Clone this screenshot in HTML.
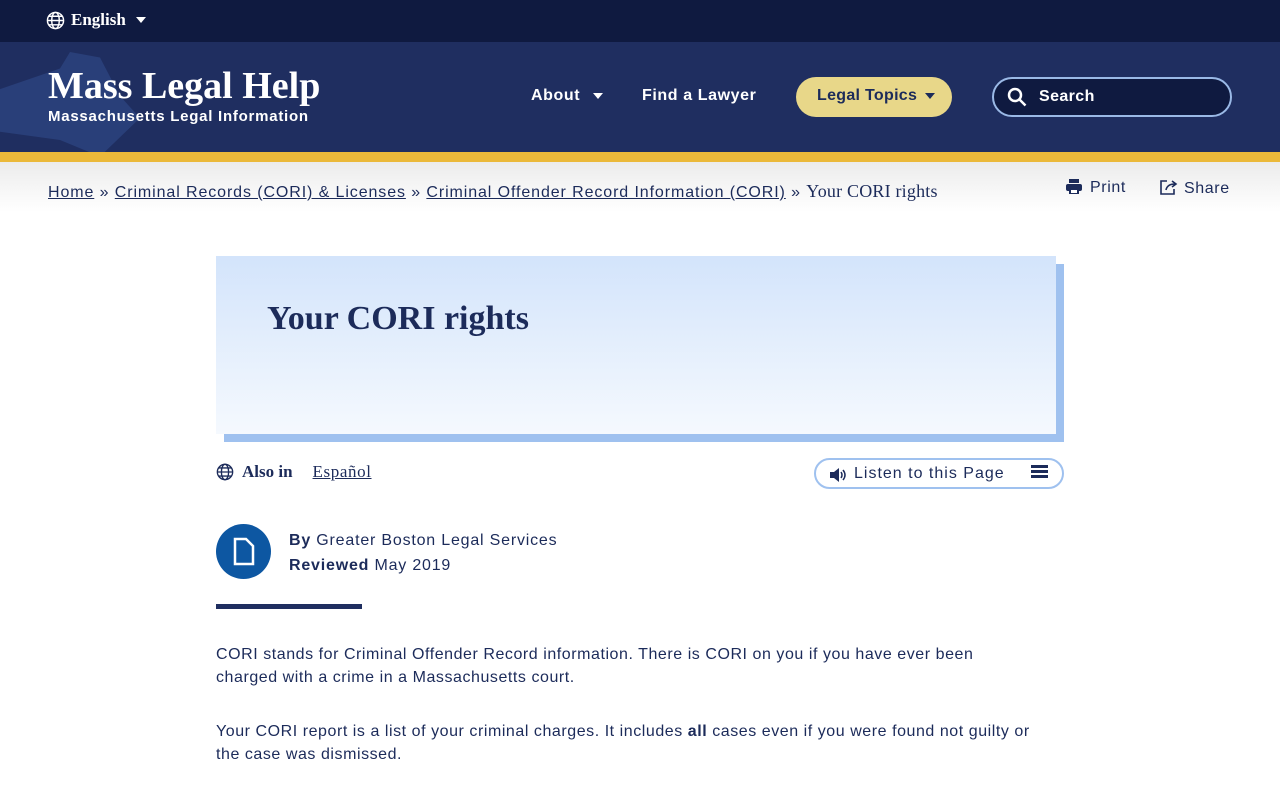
<!DOCTYPE html>
<html><head><meta charset="utf-8"><style>
*{margin:0;padding:0;box-sizing:border-box}
body{width:1280px;height:800px;overflow:hidden;background:#fff;font-family:"Liberation Sans",sans-serif;color:#1c2b5a}
.top{height:42px;background:#0f1a40;position:relative}
.lang{position:absolute;left:46px;top:10px;color:#fff;font-family:"Liberation Serif",serif;font-weight:bold;font-size:17px;display:flex;align-items:center;gap:6px}
.hdr{height:110px;background:#1f2e60;position:relative;overflow:hidden}
.map{position:absolute;left:-20px;top:10px;width:200px;height:110px;background:#2c4380;opacity:.8;clip-path:polygon(0 40%,40% 15%,45% 0,60% 5%,70% 40%,80% 60%,60% 95%,40% 80%,0 70%)}
.logo{position:absolute;left:48px;top:24px;color:#fff}
.logo h1{font-family:"Liberation Serif",serif;font-size:38px;font-weight:bold;letter-spacing:0px;line-height:40px}
.logo p{font-size:15px;font-weight:bold;margin-top:2px;letter-spacing:.75px}
.nav{position:absolute;top:35px;color:#fff;font-weight:bold;font-size:16px;letter-spacing:.6px}
.tri{display:inline-block;width:0;height:0;border-left:5px solid transparent;border-right:5px solid transparent;border-top:6px solid currentColor;vertical-align:middle;margin-left:8px}
.lt{position:absolute;left:796px;top:35px;width:156px;height:40px;border-radius:20px;background:#e8d789;color:#1c2b5a;font-weight:bold;font-size:16px;padding:10px 0 0 21px;letter-spacing:.3px}
.search{position:absolute;left:992px;top:35px;width:240px;height:40px;border-radius:20px;border:2px solid #9ab9e6;background:#0f1a40;color:#fff;font-size:16px;font-weight:bold;padding:9px 0 0 45px;letter-spacing:.4px}
.gold{height:10px;background:#ebb93a}
.bc{height:50px;background:linear-gradient(#ececec,#fff);position:relative;font-size:16px}
.bc .l{position:absolute;left:48px;top:19px;white-space:nowrap;letter-spacing:.9px}
.bc a{color:#1c2b5a;text-decoration:underline}
.bc .s{font-family:"Liberation Serif",serif;font-size:18px;letter-spacing:.2px}
.pr{position:absolute;top:17px;font-size:16px;letter-spacing:.6px}
.hero{position:absolute;left:216px;top:256px;width:840px;height:178px;background:linear-gradient(#d3e4fb,#f5f9fe);box-shadow:8px 8px 0 #9fc1ef}
.hero h2{font-family:"Liberation Serif",serif;font-size:34px;position:absolute;left:51px;top:44px;font-weight:bold}
.also{position:absolute;left:216px;top:462px;font-family:"Liberation Serif",serif;font-size:17px;font-weight:bold;display:flex;align-items:center;gap:8px}
.listen{position:absolute;left:814px;top:458px;width:250px;height:31px;border:2px solid #9fc1ef;border-radius:16px;font-size:16px;padding:5px 0 0 38px;letter-spacing:1px}
.doc{position:absolute;left:216px;top:524px;width:55px;height:55px;border-radius:50%;background:#0d57a2}
.by{position:absolute;left:289px;top:528px;font-size:16px;line-height:25px;letter-spacing:.8px}
.bar{position:absolute;left:216px;top:604px;width:146px;height:5px;background:#1f2e60}
.p{position:absolute;left:216px;width:820px;font-size:16px;line-height:23px;letter-spacing:.55px}
</style></head><body>
<div class="top"><div class="lang"><svg width="19" height="19" viewBox="0 0 20 20" fill="none" stroke="#fff" stroke-width="1.5"><circle cx="10" cy="10" r="8.5"/><ellipse cx="10" cy="10" rx="4" ry="8.5"/><path d="M1.5 10h17M3 5.5h14M3 14.5h14"/></svg>English<span class="tri" style="margin-left:4px"></span></div></div>
<div class="hdr"><div class="map"></div>
<div class="logo"><h1>Mass Legal Help</h1><p>Massachusetts Legal Information</p></div>
<div class="nav" style="left:531px;top:45px">About<span class="tri" style="margin-left:13px"></span></div>
<div class="nav" style="left:642px;top:45px">Find a Lawyer</div>
<div class="lt">Legal Topics<span class="tri"></span></div>
<div class="search"><svg style="position:absolute;left:13px;top:8px" width="20" height="20" viewBox="0 0 20 20" fill="none" stroke="#fff" stroke-width="2.5"><circle cx="8" cy="8" r="6"/><path d="M12.5 12.5l6 6"/></svg>Search</div>
</div>
<div class="gold"></div>
<div class="bc"><div class="l"><a>Home</a> » <a>Criminal Records (CORI) &amp; Licenses</a> » <a>Criminal Offender Record Information (CORI)</a> » <span class="s">Your CORI rights</span></div>
<div class="pr" style="left:1066px"><svg width="16" height="15" viewBox="0 0 16 15" fill="#1c2b5a" style="vertical-align:-2px;margin-right:8px"><rect x="3" y="0" width="10" height="4"/><rect x="0" y="5" width="16" height="7" rx="2"/><rect x="4" y="10" width="8" height="5" fill="#fff" stroke="#1c2b5a" stroke-width="2"/></svg>Print</div>
<div class="pr" style="left:1160px"><svg width="18" height="16" viewBox="0 0 18 16" fill="none" stroke="#1c2b5a" stroke-width="1.6" style="vertical-align:-2px;margin-right:6px"><path d="M7 2H1v13h13v-5"/><path d="M6 11c1-5 5-6 9-6M12 2l4 3-4 3"/></svg>Share</div></div>
<div class="hero"><h2>Your CORI rights</h2></div>
<div class="also"><svg width="18" height="18" viewBox="0 0 20 20" fill="none" stroke="#1c2b5a" stroke-width="1.5"><circle cx="10" cy="10" r="8.5"/><ellipse cx="10" cy="10" rx="4" ry="8.5"/><path d="M1.5 10h17M3 5.5h14M3 14.5h14"/></svg>Also in <span style="margin-left:12px;text-decoration:underline;font-weight:normal;letter-spacing:.6px">Español</span></div>
<div class="listen"><svg style="position:absolute;left:14px;top:8px" width="18" height="14" viewBox="0 0 18 14" fill="#1c2b5a"><path d="M0 4h4l5-4v14l-5-4H0z"/><path d="M11 4q2 3 0 6M13 2q4 5 0 10" stroke="#1c2b5a" fill="none" stroke-width="1.5"/></svg>Listen to this Page<svg style="position:absolute;right:14px;top:5px" width="17" height="14" viewBox="0 0 17 14" fill="#1c2b5a"><rect y="0" width="17" height="3"/><rect y="5" width="17" height="3"/><rect y="10" width="17" height="3"/></svg></div>
<div class="doc"><svg style="position:absolute;left:17px;top:13px" width="22" height="29" viewBox="0 0 22 29" fill="none" stroke="#fff" stroke-width="2.5"><path d="M2 2h11l7 7v18H2z"/></svg></div>
<div class="by"><b>By</b> Greater Boston Legal Services<br><b>Reviewed</b> May 2019</div>
<div class="bar"></div>
<div class="p" style="top:643px">CORI stands for Criminal Offender Record information. There is CORI on you if you have ever been charged with a crime in a Massachusetts court.</div>
<div class="p" style="top:720px">Your CORI report is a list of your criminal charges. It includes <b>all</b> cases even if you were found not guilty or the case was dismissed.</div>
</body></html>
